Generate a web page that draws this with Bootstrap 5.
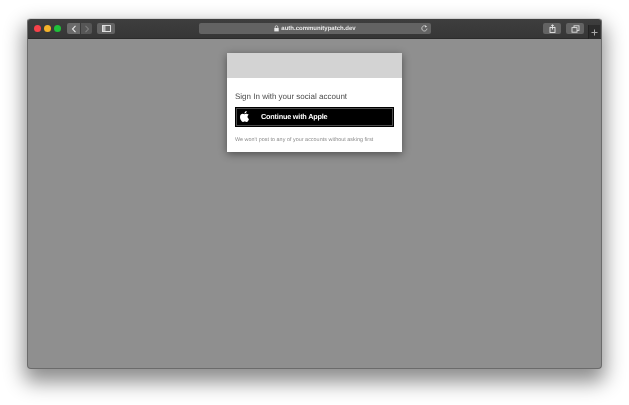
<!doctype html>
<html lang="en">
<head>
<meta charset="utf-8">
<title>Sign in</title>
<link href="https://cdn.jsdelivr.net/npm/bootstrap@5.3.0/dist/css/bootstrap.min.css" rel="stylesheet">
<style>
html,body{height:100%;background:#fff;font-family:"Liberation Sans",Arial,sans-serif;overflow:hidden;text-rendering:geometricPrecision}
.stage{padding:18px 27px 0 27px;height:405px}
.win{position:relative;width:575px;height:351px;border-radius:4px;overflow:hidden;background:#8f8f8f;border:1px solid #6b6b6b;border-top-color:#cfcfcf;}
.shadowbox{border-radius:5px;width:575px;height:351px;box-shadow:0 10px 20px 3px rgba(0,0,0,.45)}
.tbar{height:20px;background:linear-gradient(#3e3e3e,#363636);padding:0 7px 0 6px;border-bottom:1px solid #2b2b2b}
.dot{width:7px;height:7px;border-radius:50%}
.dotrow{gap:3px}
.tool{height:11px;background:#636363;border-radius:2px;display:flex;align-items:center;justify-content:center}
.backfwd{margin-left:6px}
.seg-l{width:13px;border-radius:2px 0 0 2px;background:#6a6a6a}
.seg-r{width:11px;margin-left:1px;border-radius:0 2px 2px 0;background:#565656}
.side{width:18px;margin-left:5px}
.urlbar{position:absolute;left:171px;top:4px;width:232px;height:11px;background:#636363;border-radius:2px;color:#e8e8e8;font-size:6px;font-weight:700;line-height:11px;display:flex;align-items:center;justify-content:center;gap:2px}
.urltext{padding-top:1px}
.urltext,.soft{filter:blur(.3px)}
.reload{position:absolute;right:3px;top:2px}
.rtools{position:absolute;right:17px;top:4px;gap:5px}
.w18{width:18px}
.newtab{position:absolute;right:1px;top:6px;width:12px;height:14px;background:#2c2c2c;display:flex;align-items:center;justify-content:center;border-left:1px solid #222}
.panel{position:absolute;left:199px;top:34px;width:175px;height:99px;background:#fff;box-shadow:0 2px 8px rgba(0,0,0,.45)}
.phead{height:25px;background:#d3d3d3}
.pbody{padding:13px 8px 0 8px}
.ptitle{font-size:8px;line-height:11px;color:#4a4a4a;margin-bottom:5px}
.applebtn{height:20px;background:#000;border:1px solid #000;outline:1px solid #4c4c4c;outline-offset:-2px;color:#fff;font-size:7.3px;font-weight:700;letter-spacing:-.2px;line-height:17px;padding:0 0 0 25px;position:relative}
.applebtn svg{position:absolute;left:4px;top:3px}
.pnote{font-size:5.4px;line-height:7px;color:#8a8a8a;margin-top:10px;letter-spacing:.03px}
</style>
</head>
<body>
<div class="stage">
  <div class="shadowbox">
  <div class="win">
    <div class="tbar d-flex align-items-center">
      <div class="d-flex dotrow">
        <span class="dot" style="background:#f8424a"></span>
        <span class="dot" style="background:#f5b32a"></span>
        <span class="dot" style="background:#1fc13a"></span>
      </div>
      <div class="d-flex backfwd">
        <span class="tool seg-l"><svg width="6" height="8" viewBox="0 0 6 8"><path d="M4.5 .8 1.5 4l3 3.2" fill="none" stroke="#e6e6e6" stroke-width="1.1"/></svg></span>
        <span class="tool seg-r"><svg width="6" height="8" viewBox="0 0 6 8"><path d="M1.5 .8 4.5 4l-3 3.2" fill="none" stroke="#7d7d7d" stroke-width="1.1"/></svg></span>
      </div>
      <span class="tool side"><svg width="9" height="7" viewBox="0 0 9 7"><rect x=".5" y=".5" width="8" height="6" fill="none" stroke="#e0e0e0"/><rect x="1" y="1" width="2.5" height="5" fill="#bdbdbd"/></svg></span>
      <div class="urlbar">
        <svg width="5" height="7" viewBox="0 0 5 7"><path d="M1.2 3V2a1.3 1.3 0 0 1 2.6 0v1" fill="none" stroke="#e8e8e8" stroke-width=".7"/><rect x=".3" y="3" width="4.4" height="3.4" fill="#e8e8e8"/></svg>
        <span class="urltext">auth.communitypatch.dev</span>
        <svg class="reload" width="7" height="7" viewBox="0 0 7 7"><path d="M5.6 2A2.6 2.6 0 1 0 6 3.6" fill="none" stroke="#d8d8d8" stroke-width=".8"/><path d="M4 .2 6 1.8 4 2.6z" fill="#d8d8d8"/></svg>
      </div>
      <div class="rtools d-flex">
        <span class="tool w18"><svg width="7" height="9" viewBox="0 0 7 9"><rect x="1" y="3.5" width="5" height="5" fill="none" stroke="#e6e6e6" stroke-width=".9"/><path d="M3.5 5.5V.8M2 2.2 3.5.7 5 2.2" fill="none" stroke="#e6e6e6" stroke-width=".9"/></svg></span>
        <span class="tool w18"><svg width="9" height="8" viewBox="0 0 9 8"><rect x="3" y=".8" width="5" height="4.6" fill="none" stroke="#e0e0e0" stroke-width=".9"/><rect x="1" y="2.6" width="5" height="4.6" fill="#636363" stroke="#e0e0e0" stroke-width=".9"/></svg></span>
      </div>
      <span class="newtab"><svg width="7" height="7" viewBox="0 0 7 7"><path d="M3.5 .5v6M.5 3.5h6" stroke="#a8a8a8" stroke-width="1"/></svg></span>
    </div>
    <div class="panel">
      <div class="phead"></div>
      <div class="pbody">
        <div class="ptitle soft">Sign In with your social account</div>
        <div class="applebtn">
          <svg width="9" height="11" viewBox="0 0 814 1000"><path fill="#fff" d="M788 341c-6 4-108 62-108 190 0 148 130 201 134 202-1 3-21 72-69 142-43 62-88 123-156 123s-86-39-165-39c-77 0-104 41-166 41s-106-57-156-127C45 791 0 666 0 548 0 358 123 258 245 258c65 0 119 43 160 43 39 0 100-45 174-45 28 0 129 2 209 85zM554 161c31-36 52-87 52-137 0-7-1-14-2-20-50 2-110 33-146 75-28 32-55 83-55 134 0 8 1 15 2 18 3 1 9 1 14 1 45 0 102-30 135-71z"/></svg>
          <span class="soft d-inline-block">Continue with Apple</span>
        </div>
        <div class="pnote soft">We won't post to any of your accounts without asking first</div>
      </div>
    </div>
  </div>
  </div>
</div>
<script src="https://cdn.jsdelivr.net/npm/bootstrap@5.3.0/dist/js/bootstrap.bundle.min.js"></script>
</body>
</html>
